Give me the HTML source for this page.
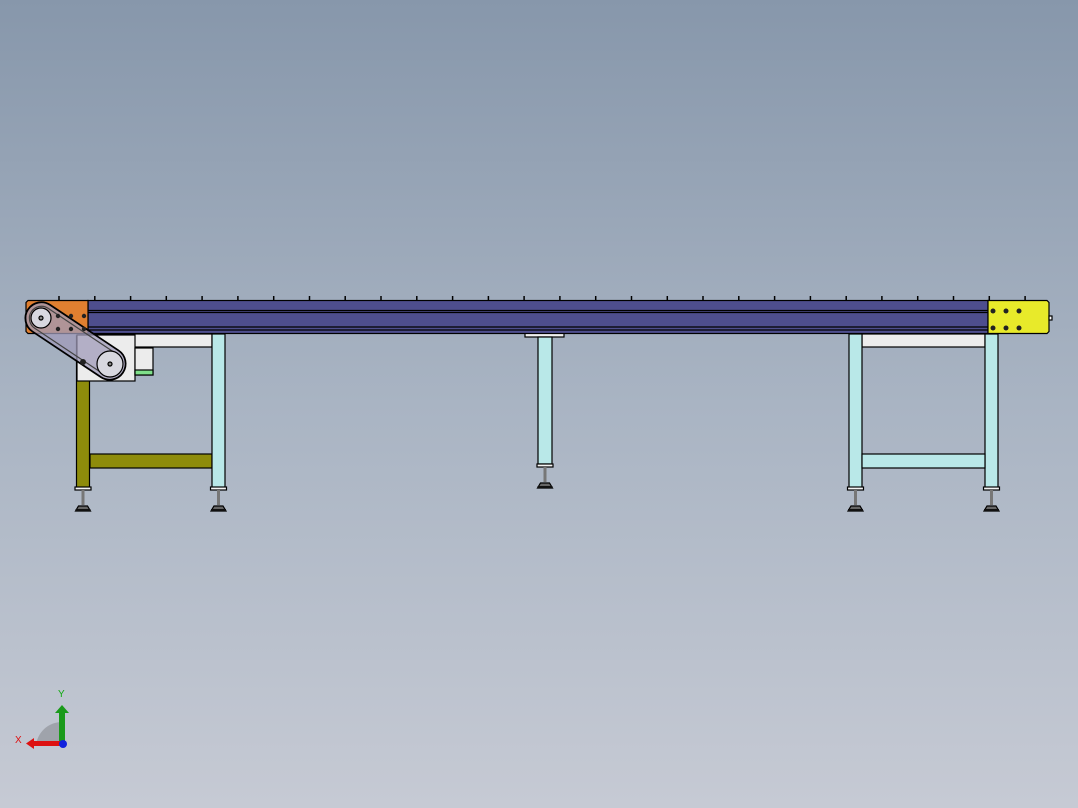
<!DOCTYPE html>
<html><head><meta charset="utf-8"><style>
html,body{margin:0;padding:0;width:1078px;height:808px;overflow:hidden}
body{background:linear-gradient(#8797ab,#a9b4c3 50%,#c6cad4)}
svg{position:absolute;left:0;top:0}
</style></head><body>
<svg width="1078" height="808" viewBox="0 0 1078 808" stroke="#000" stroke-width="1.2">
<g id="ticks" stroke-width="1.5"></g>
<rect x="88" y="334" width="124" height="13" fill="#ececec"/>
<rect x="862" y="334" width="123" height="13" fill="#ececec"/>
<rect x="76.5" y="336" width="13" height="152" fill="#8e8c0b"/>
<rect x="90" y="454" width="122" height="14" fill="#8e8c0b"/>
<rect x="212" y="334" width="13" height="154" fill="#b9e8e8"/>
<rect x="525" y="333" width="39" height="4" fill="#f2f2f2"/>
<rect x="538" y="337" width="14" height="127" fill="#b9e8e8"/>
<rect x="849" y="334" width="13" height="154" fill="#b9e8e8"/>
<rect x="985" y="334" width="13" height="154" fill="#b9e8e8"/>
<rect x="862" y="454" width="123" height="14" fill="#b9e8e8"/>
<g id="feet"></g>
<rect x="88" y="300.5" width="900" height="33" fill="#4e4e8e"/>
<line x1="88" y1="310.5" x2="988" y2="310.5"/><line x1="88" y1="312.5" x2="988" y2="312.5"/>
<line x1="88" y1="327" x2="988" y2="327"/><line x1="88" y1="330" x2="988" y2="330"/>
<path d="M988 300.5h59l2 2v29l-2 2h-59z" fill="#e8ea2a"/>
<rect x="1049" y="316" width="3" height="4" fill="#fff"/>
<g fill="#222" stroke="none">
<circle cx="993" cy="311" r="2.5"/><circle cx="1006" cy="311" r="2.5"/><circle cx="1019" cy="311" r="2.5"/>
<circle cx="993" cy="328" r="2.5"/><circle cx="1006" cy="328" r="2.5"/><circle cx="1019" cy="328" r="2.5"/>
</g>
<path d="M28 300.5h60v33h-60l-2-2v-29z" fill="#e07f30"/>
<rect x="77" y="335" width="58" height="46" fill="#ececec"/>
<rect x="135" y="348" width="18" height="27" fill="#ececec"/>
<rect x="135" y="370" width="18" height="5" fill="#7fe08a"/>
<g transform="translate(75.5 341) rotate(33.7)">
<rect x="-57" y="-16" width="114" height="32" rx="16" fill="rgba(160,155,185,0.75)" stroke-width="1.8"/>
<rect x="-53" y="-12" width="106" height="24" rx="12" fill="none" stroke="#444"/>
</g>
<circle cx="41" cy="318" r="10" fill="#d8d8e0"/><circle cx="41" cy="318" r="2" fill="#888"/>
<circle cx="110" cy="364" r="13" fill="#d8d8e0"/><circle cx="110" cy="364" r="2" fill="#888"/>
<g fill="#222" stroke="none">
<circle cx="58" cy="316" r="2.2"/><circle cx="71" cy="316" r="2.2"/><circle cx="84" cy="316" r="2.2"/>
<circle cx="58" cy="329" r="2.2"/><circle cx="71" cy="329" r="2.2"/><circle cx="84" cy="329" r="2.2"/>
<circle cx="83" cy="362" r="3"/>
</g>
<path d="M62 722a26 26 0 0 0-26 24h26z" fill="#9fa3ab" stroke="none"/>
<rect x="59" y="712" width="6" height="32" fill="#1a9a1a" stroke="none"/>
<path d="M55 713l7-8 7 8z" fill="#1a9a1a" stroke="none"/>
<rect x="33" y="741" width="28" height="5" fill="#d11" stroke="none"/>
<path d="M34 738l-8 5.5 8 5.5z" fill="#d11" stroke="none"/>
<circle cx="63" cy="744" r="4" fill="#12d" stroke="none"/>
<text x="58" y="697" font-family="Liberation Sans" font-size="10" fill="#1a1" stroke="none">Y</text>
<text x="15" y="743" font-family="Liberation Sans" font-size="10" fill="#d11" stroke="none">X</text>
</svg>
<script>
var t=document.getElementById('ticks'),s='';
for(var i=0;i<28;i++){var x=(59+i*35.78).toFixed(1);s+='<line x1="'+x+'" y1="296" x2="'+x+'" y2="300"/>';}
t.innerHTML=s;
var f=document.getElementById('feet'),h='';
function foot(cx,y){h+='<rect x="'+(cx-8)+'" y="'+y+'" width="16" height="3" fill="#f4f4f4"/><rect x="'+(cx-1.5)+'" y="'+(y+3)+'" width="3" height="15" fill="#777" stroke="none"/><path d="M'+(cx-7.5)+' '+(y+24)+'l3-5h9l3 5z" fill="#666"/><rect x="'+(cx-7.5)+'" y="'+(y+22)+'" width="15" height="2" fill="#111" stroke="none"/>';}
foot(83,487);foot(218.5,487);foot(855.5,487);foot(991.5,487);foot(545,464);
f.innerHTML=h;
</script>
</body></html>
